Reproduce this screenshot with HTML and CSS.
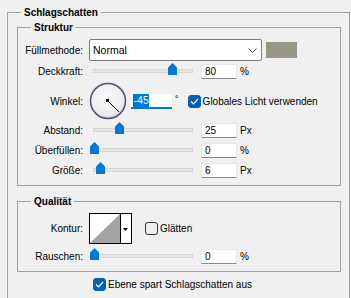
FILE: index.html
```html
<!DOCTYPE html>
<html lang="de">
<head>
    <meta charset="UTF-8">
    <title>Schlagschatten</title>
    <link rel="stylesheet" href="styles.css">
</head>
<body>
<div class="dialog">
    <fieldset class="group outer">
        <legend>Schlagschatten</legend>

        <!-- Struktur -->
        <fieldset class="group inner">
            <legend>Struktur</legend>

            <div class="row row-blend">
                <span class="lbl">Füllmethode:</span>
                <div class="select">
                    <span>Normal</span>
                    <svg class="chevron" width="9" height="5" viewBox="0 0 9 5"><polyline points="0.5,0.5 4.5,4.5 8.5,0.5" fill="none" stroke="#555" stroke-width="1"/></svg>
                </div>
                <div class="swatch"></div>
            </div>

            <div class="row row-opacity">
                <span class="lbl">Deckkraft:</span>
                <div class="slider"><span class="thumb" style="left: 74px"></span></div>
                <div class="field">80</div>
                <span class="unit">%</span>
            </div>

            <div class="row row-angle">
                <span class="lbl">Winkel:</span>
                <svg class="dial" width="38" height="38" viewBox="0 0 38 38">
                    <defs>
                        <radialGradient id="dialFill" cx="45%" cy="40%" r="60%">
                            <stop offset="0" stop-color="#fbfbfb"/>
                            <stop offset="0.8" stop-color="#ececec"/>
                            <stop offset="1" stop-color="#d8d8dc"/>
                        </radialGradient>
                    </defs>
                    <circle cx="19" cy="19" r="17.5" fill="url(#dialFill)" stroke="#4b5178" stroke-width="1.5"/>
                    <line x1="18.5" y1="18.5" x2="30" y2="30" stroke="#000" stroke-width="1"/>
                    <rect x="17" y="17" width="3" height="3" fill="#000"/>
                </svg>
                <div class="field angle"><span class="sel">-45</span></div>
                <span class="deg">°</span>
                <label class="check check-global"><span class="box on"><svg width="9" height="7" viewBox="0 0 9 7"><polyline points="1,3.5 3.5,6 8,1" fill="none" stroke="#fff" stroke-width="1.2"/></svg></span>Globales Licht verwenden</label>
            </div>

            <div class="row">
                <span class="lbl">Abstand:</span>
                <div class="slider"><span class="thumb" style="left: 21px"></span></div>
                <div class="field">25</div>
                <span class="unit">Px</span>
            </div>

            <div class="row">
                <span class="lbl">Überfüllen:</span>
                <div class="slider"><span class="thumb" style="left: -4px"></span></div>
                <div class="field">0</div>
                <span class="unit">%</span>
            </div>

            <div class="row">
                <span class="lbl">Größe:</span>
                <div class="slider"><span class="thumb" style="left: 2px"></span></div>
                <div class="field">6</div>
                <span class="unit">Px</span>
            </div>
        </fieldset>

        <!-- Qualität -->
        <fieldset class="group inner quality">
            <legend>Qualität</legend>

            <div class="row row-contour">
                <span class="lbl">Kontur:</span>
                <svg class="contour" width="43" height="31" viewBox="0 0 43 31">
                    <rect x="0.5" y="0.5" width="42" height="30" fill="#fff" stroke="#000"/>
                    <polygon points="1,30 31,1 31,30" fill="#a3a3a3"/>
                    <line x1="31.5" y1="0.5" x2="31.5" y2="30.5" stroke="#000"/>
                    <polygon points="34,15 39,15 36.5,18" fill="#000"/>
                </svg>
                <label class="check check-smooth"><span class="box"></span>Glätten</label>
            </div>

            <div class="row row-noise">
                <span class="lbl">Rauschen:</span>
                <div class="slider"><span class="thumb" style="left: -4px"></span></div>
                <div class="field">0</div>
                <span class="unit">%</span>
            </div>
        </fieldset>

        <label class="check check-knockout"><span class="box on"><svg width="9" height="7" viewBox="0 0 9 7"><polyline points="1,3.5 3.5,6 8,1" fill="none" stroke="#fff" stroke-width="1.2"/></svg></span>Ebene spart Schlagschatten aus</label>
    </fieldset>
</div>
</body>
</html>
```

FILE: styles.css
```css
/* Dialog basics */
* {
    box-sizing: border-box;
}

body {
    margin: 0;
    background-color: #f0f0f0;
    color: #000;
    font-family: "Liberation Sans", Arial, sans-serif;
    font-size: 10px;
    overflow: hidden;
}

.dialog {
    padding: 6px 0 0 7px;
}

/* Group boxes */
.group {
    margin: 0;
    padding: 0;
    min-width: 0;
    border: 1px solid #a0a0a0;
}

.group legend {
    margin-left: 13px;
    padding: 0 3px;
    font-weight: bold;
    line-height: 13px;
}

/* the outer box runs on below the window edge */
.outer {
    width: 343px;
    height: 293px;
    padding: 2px 8px 0 9px;
}

.outer > legend {
    margin-left: 4px;
}

.inner {
    padding-bottom: 5px;
}

.quality {
    margin-top: 9px;
}

/* Rows */
.row {
    display: flex;
    align-items: center;
    height: 20px;
}

.lbl {
    flex: none;
    width: 65px;
    margin-right: 6px;
    text-align: right;
}

.row-blend {
    height: 22px;
    margin-top: 5px;
}

.row-opacity {
    height: 18px;
    margin-top: 1px;
}

.row-angle {
    height: 38px;
    margin-top: 2px;
}

.row-contour {
    height: 31px;
    margin-top: 5px;
}

.row-noise {
    margin-top: 2px;
}

/* Blend mode select */
.select {
    display: flex;
    align-items: center;
    justify-content: space-between;
    width: 173px;
    height: 22px;
    padding: 0 4px 0 3px;
    background-color: #fff;
    border: 1px solid #7a7a7a;
    border-radius: 2px;
    font-size: 10.5px;
}

.chevron {
    margin-top: 1px;
}

.swatch {
    width: 31px;
    height: 16px;
    margin-left: 4px;
    background-color: #989687;
}

/* Sliders */
.slider {
    position: relative;
    flex: none;
    width: 100px;
    height: 4px;
    margin-left: 4px;
    background-color: #e4e4e4;
    border: 1px solid #d6d6d6;
}

.thumb {
    position: absolute;
    top: -7px;
    width: 9px;
    height: 12px;
    background-color: #0078d7;
    clip-path: polygon(50% 0, 100% 38%, 100% 100%, 0 100%, 0 38%);
}

/* Number fields */
.field {
    flex: none;
    width: 36px;
    height: 15px;
    margin-left: 8px;
    padding-left: 3px;
    line-height: 14px;
    background-color: #fff;
    border: 1px solid #e6e6e6;
    border-bottom-color: #8a8a8a;
}

.unit {
    margin-left: 3px;
}

/* Angle */
.dial {
    flex: none;
}

.field.angle {
    width: 41px;
    margin-left: 4px;
    padding-left: 2px;
    border: none;
    border-bottom: 2px solid #0078d7;
}

.sel {
    display: inline-block;
    padding: 0 1px;
    line-height: 13px;
    background-color: #0078d7;
    color: #fff;
}

.deg {
    align-self: flex-start;
    margin: 12px 0 0 3px;
    font-size: 9px;
}

/* Checkboxes */
.check {
    display: flex;
    align-items: center;
}

.box {
    display: flex;
    align-items: center;
    justify-content: center;
    width: 13px;
    height: 13px;
    margin-right: 2px;
    border: 1px solid #333;
    border-radius: 3px;
}

.box.on {
    background-color: #005fb8;
    border-color: #005fb8;
}

.check-global {
    margin-left: 9px;
}

.check-smooth {
    margin-left: 13px;
}

.check-knockout {
    height: 14px;
    margin: 5px 0 0 76px;
}

/* Contour preview */
.contour {
    flex: none;
}
```
